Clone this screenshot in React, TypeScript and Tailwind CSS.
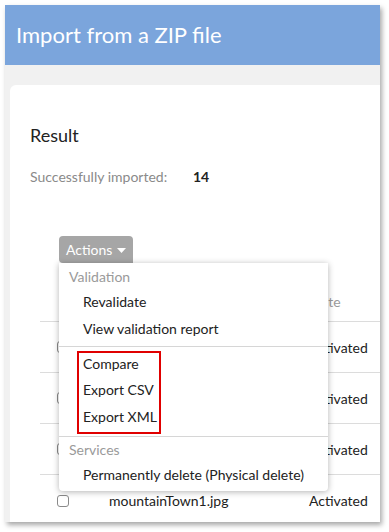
import React from 'react';

const rows = [
  { name: '', state: 'Activated' },
  { name: '', state: 'Activated' },
  { name: '', state: 'Activated' },
  { name: 'mountainTown1.jpg', state: 'Activated' },
];

const Checkbox = () => (
  <span className="block w-[12px] h-[12px] rounded-[3px] border border-[#8a8a8a] bg-white" />
);

const ActionsMenu = () => (
  <div className="absolute left-0 top-full w-[269px] bg-white rounded-b-[4px] shadow-[0_1px_6px_rgba(0,0,0,0.3)] pt-[1px] pb-[3px] text-[14px] text-[#222] z-10">
    <div className="h-[24px] flex items-center pl-[10px] text-[#9a9a9a]">Validation</div>
    <div className="h-[27px] flex items-center pl-[24px]">Revalidate</div>
    <div className="h-[27px] flex items-center pl-[24px]">View validation report</div>
    <div className="h-px bg-[#d6d6d6] my-[4px]" />
    <div className="ml-[18px] w-[84px] border-2 border-[#e00000] pl-[4px] pb-[3px] mt-[1px]">
      <div className="h-[26px] flex items-center -mt-[3px]">Compare</div>
      <div className="h-[27px] flex items-center">Export CSV</div>
      <div className="h-[26px] flex items-center">Export XML</div>
    </div>
    <div className="h-px bg-[#d6d6d6] mt-[2px]" />
    <div className="h-[24px] flex items-center pl-[10px] text-[#9a9a9a]">Services</div>
    <div className="h-[27px] flex items-center pl-[24px]">Permanently delete (Physical delete)</div>
  </div>
);

const App: React.FC = () => {
  return (
    <div className="w-[389px] h-[532px] bg-white overflow-hidden pt-[5px] pl-[5px] font-['Lato','Open_Sans',sans-serif]">
      <div className="w-[375px] h-[517px] bg-[#f1f1f1] flex flex-col overflow-hidden shadow-[2px_3px_5px_rgba(0,0,0,0.35)]">
        <div className="h-[60px] shrink-0 bg-[#7ba5dc] flex items-center pl-[11px] text-white text-[22px] pb-[2px]">
          Import from a ZIP file
        </div>
        <div className="flex-1 pt-[20px] pl-[5px]">
          <div className="h-full bg-white rounded-tl-[6px] pl-[20px] pt-[38px]">
            <div className="text-[18px] leading-[24px] text-[#222]">Result</div>
            <div className="mt-[21px] flex text-[14px] leading-[18px]">
              <span className="w-[163px] text-[#8a8a8a]">Successfully imported:</span>
              <span className="font-bold text-[#222]">14</span>
            </div>

            <div className="mt-[50px] ml-[29px] relative w-fit">
              <div className="h-[27px] px-[7px] rounded-t-[4px] rounded-bl-[4px] bg-[#a6a6a6] text-white text-[14px] flex items-center gap-[5px]">
                Actions
                <svg width="9" height="5" viewBox="0 0 9 5" className="mt-[1px]">
                  <path d="M0 0 L9 0 L4.5 5 Z" fill="white" />
                </svg>
              </div>
              <ActionsMenu />
            </div>

            <div className="ml-[10px] mt-[19px] text-[14px] text-[#222]">
              <div className="h-[40px] border-b border-[#dcdcdc] flex items-center">
                <div className="w-[60px] pl-[15px] text-[#555] font-bold leading-none">⋮</div>
                <div className="w-[209px]" />
                <div className="text-[#9a9a9a]">State</div>
              </div>
              {rows.map((r, i) => (
                <div key={i} className={`h-[51px] flex items-center ${i < rows.length - 1 ? 'border-b border-[#dcdcdc]' : ''}`}>
                  <div className="w-[69px] pl-[17px]">
                    <Checkbox />
                  </div>
                  <div className="w-[200px]">{r.name}</div>
                  <div>{r.state}</div>
                </div>
              ))}
            </div>
          </div>
        </div>
      </div>
    </div>
  );
};

export default App;
